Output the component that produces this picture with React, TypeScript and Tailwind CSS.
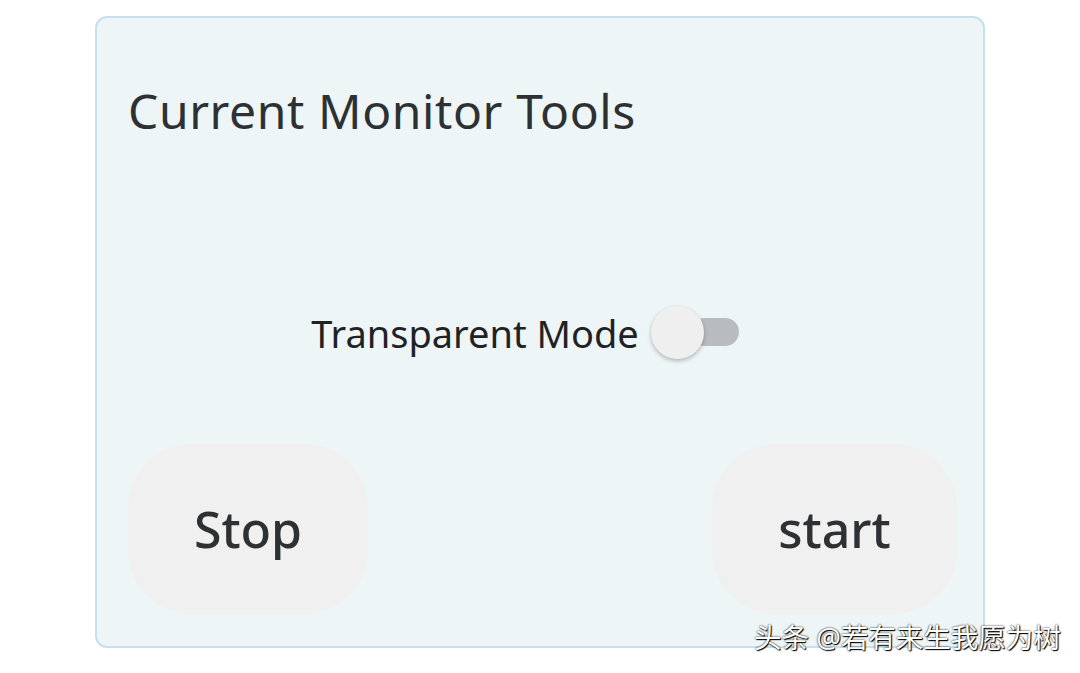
import React, { useState } from "react";

export default function App() {
  const [transparent, setTransparent] = useState(false);
  return (
    <div className="relative h-[673px] w-[1080px] overflow-hidden bg-white font-['Noto_Sans','Noto_Sans_CJK_SC',sans-serif] text-[#2d3133]">
      <div className="ml-[95px] mt-[16px] flex h-[632px] w-[890px] flex-col rounded-[12px] border-2 border-[#c6e0f0] bg-[#edf5f6]">
        <h1 className="ml-[31px] mt-[69px] text-[48px] leading-[48px] tracking-[0.6px]">Current Monitor Tools</h1>

        <div className="mt-[171px] flex items-center justify-center pr-[30px]">
          <span className="text-[38px] leading-[44px] text-[#1f2224]">Transparent Mode</span>
          <button
            onClick={() => setTransparent(!transparent)}
            className="relative ml-[12px] h-[54px] w-[88px]"
          >
            <span className="absolute right-0 top-[12px] h-[28px] w-[48px] rounded-full bg-[#b9bcbe]" />
            <span className="absolute left-0 top-0 h-[53px] w-[53px] rounded-full bg-[#efefef] shadow-[0_2px_4px_rgba(0,0,0,0.25)]" />
          </button>
        </div>

        <div className="mt-[84px] flex justify-between pl-[31px] pr-[26px]">
          <button className="flex h-[170px] w-[240px] items-center justify-center rounded-[64px] bg-[#f0f0f0] text-[50px] font-medium">
            Stop
          </button>
          <button className="flex h-[170px] w-[245px] items-center justify-center rounded-[64px] bg-[#f0f0f0] text-[50px] font-medium">
            start
          </button>
        </div>
      </div>

      <div className="absolute left-[754px] top-[619px] text-[27.5px] leading-[38px] text-white [text-shadow:0_0_2px_#000,1px_1px_1px_#000]">
        头条 @若有来生我愿为树
      </div>
    </div>
  );
}
